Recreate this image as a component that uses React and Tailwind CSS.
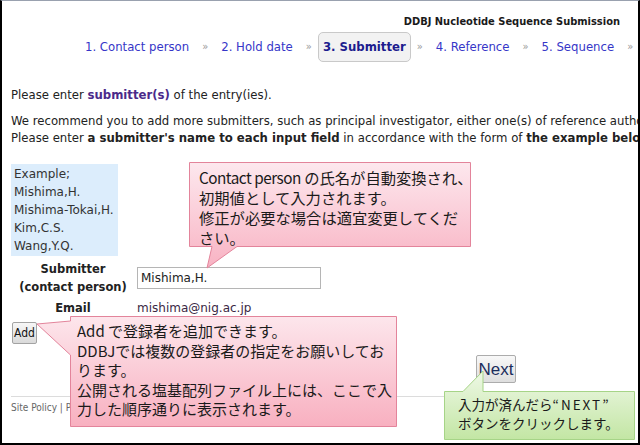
import React from 'react'

const steps = [
  { label: '1. Contact person' },
  { label: '2. Hold date' },
  { label: '3. Submitter', active: true },
  { label: '4. Reference' },
  { label: '5. Sequence' },
]

const examples = ['Example;', 'Mishima,H.', 'Mishima-Tokai,H.', 'Kim,C.S.', 'Wang,Y.Q.']

const web = { fontFamily: "Verdana, 'DejaVu Sans', sans-serif" }
const narrow = { fontFamily: "Tahoma, 'DejaVu Sans Condensed', 'DejaVu Sans', sans-serif" }
const jp = { fontFamily: "'Noto Sans CJK JP', 'Noto Sans', sans-serif" }

function Bubbles() {
  // shapes in page coords; svg sits inside the 2px/1px border
  return (
    <svg
      className="pointer-events-none absolute left-[-2px] top-[-1px]"
      width="640"
      height="445"
      viewBox="0 0 640 445"
    >
      <defs>
        <linearGradient id="pink" x1="0" y1="0" x2="0" y2="1">
          <stop offset="0" stopColor="#fde8ee" />
          <stop offset="1" stopColor="#f8b3c3" />
        </linearGradient>
        <linearGradient id="pink2" x1="0" y1="0" x2="0" y2="1">
          <stop offset="0" stopColor="#fde6ec" />
          <stop offset="1" stopColor="#f8b0c0" />
        </linearGradient>
        <linearGradient id="green" x1="0" y1="0" x2="0" y2="1">
          <stop offset="0" stopColor="#eef8e6" />
          <stop offset="1" stopColor="#c3e6a4" />
        </linearGradient>
      </defs>
      <path
        d="M189.5 162.5 H470.5 V246.5 H237 L207 268 L212 246.5 H189.5 Z"
        fill="url(#pink)"
        stroke="#e3849b"
      />
      <path
        d="M70.5 316.5 H396.5 V426.5 H70.5 V355 L37 324 L70.5 321 Z"
        fill="url(#pink2)"
        stroke="#e3849b"
      />
      <path
        d="M444.5 391.5 H463 L483 371 V391.5 H634.5 V439.5 H444.5 Z"
        fill="url(#green)"
        stroke="#a6d487"
      />
    </svg>
  )
}

export default function App() {
  return (
    <div
      className="relative h-[445px] w-[640px] overflow-hidden border-x-2 border-b-2 border-t border-black border-t-gray-400 bg-white text-[12px] text-[#222]"
      style={web}
    >
      <div className="pr-[18px] pt-[13px] text-right text-[11px] font-bold leading-4 text-[#1a1a1a]" style={narrow}>
        DDBJ Nucleotide Sequence Submission
      </div>

      <nav className="mt-[2px] flex h-[30px] items-center gap-[6px] whitespace-nowrap pl-[76px] text-[13px]" style={narrow}>
        {steps.map((s, i) => (
          <React.Fragment key={s.label}>
            {i > 0 && <span className="text-[11px] text-[#999]">»</span>}
            {s.active ? (
              <span className="flex h-[30px] items-center rounded-[5px] border border-[#c9c9c9] bg-[#f2f2f2] px-[4px] font-bold text-[#1c1c8e]">
                {s.label}
              </span>
            ) : (
              <span className="px-[7px] text-[#3636c8]">{s.label}</span>
            )}
          </React.Fragment>
        ))}
        <span className="text-[11px] text-[#999]">»</span>
      </nav>

      <div className="pl-[9px] leading-[17px]">
        <p className="mt-[25px] whitespace-nowrap text-[11.7px]">
          Please enter <b className="text-[#4b2a8a]">submitter(s)</b> of the entry(ies).
        </p>
        <p className="mt-[9px] whitespace-nowrap text-[11.7px]">
          We recommend you to add more submitters, such as principal investigator, either one(s) of reference authors.
          <br />
          Please enter <b>a submitter's name to each input field</b> in accordance with the form of{' '}
          <b>the example below</b>.
        </p>

        <div className="mt-[17px] w-[107px] bg-[#dcedfc] px-[3px] py-px leading-[18px] text-[#333]">
          {examples.map((e) => (
            <div key={e}>{e}</div>
          ))}
        </div>

        <div className="mt-[4px] flex items-center">
          <div className="w-[124px] text-center text-[11.5px] font-bold leading-[18px]">
            Submitter
            <br />
            (contact person)
          </div>
          <input
            className="ml-[2px] h-[22px] w-[184px] border border-[#b5b5b5] px-[3px] text-[12px] text-[#222] outline-none"
            style={web}
            defaultValue="Mishima,H."
          />
        </div>

        <div className="mt-[3px] flex items-center leading-[18px]">
          <div className="w-[124px] text-center text-[11.5px] font-bold">Email</div>
          <div className="ml-[2px] text-[#3a2844]">mishima@nig.ac.jp</div>
        </div>

        <button
          className="ml-px mt-[5px] block h-[22px] w-[25px] rounded-[2px] border border-[#a3a3a3] bg-gradient-to-b from-[#f7f7f7] to-[#dadada] text-[12px] leading-none text-[#111]"
          style={narrow}
        >
          Add
        </button>

        <button
          className="ml-[465px] mt-[11px] block h-[28px] w-[40px] rounded-[2px] border border-[#acacac] bg-gradient-to-b from-[#f8f8f8] to-[#dedede] text-[17px] leading-none text-[#1b2d5c]"
          style={{ fontFamily: "'Liberation Sans', Arial, sans-serif" }}
        >
          Next
        </button>

        <div className="mr-[6px] mt-[13px] border-t border-[#dcdcdc]" />
        <div className="mt-[5px] whitespace-nowrap text-[10px] leading-3 text-[#666]" style={narrow}>
          Site Policy | Privacy Policy | Contact Us
        </div>
      </div>

      <Bubbles />

      <div
        className="absolute left-[197px] top-[166px] whitespace-nowrap text-[15.3px] leading-[20px] text-[#1a1a1a]"
        style={jp}
      >
        <span className="tracking-[-0.5px]">Contact person</span> の氏名が自動変換され、
        <br />
        初期値として入力されます。
        <br />
        修正が必要な場合は適宜変更してくだ
        <br />
        さい。
      </div>

      <div
        className="absolute left-[75px] top-[320px] whitespace-nowrap text-[15px] leading-[19.5px] text-[#1a1a1a]"
        style={jp}
      >
        Add で登録者を追加できます。
        <br />
        DDBJでは複数の登録者の指定をお願いしてお
        <br />
        ります。
        <br />
        公開される塩基配列ファイル上には、ここで入
        <br />
        力した順序通りに表示されます。
      </div>

      <div
        className="absolute left-[456px] top-[394px] whitespace-nowrap text-[13.5px] leading-[19px] text-[#1a1a1a]"
        style={jp}
      >
        入力が済んだら<span className="tracking-[2px]">“NEXT”</span>
        <br />
        ボタンをクリックします。
      </div>
    </div>
  )
}
